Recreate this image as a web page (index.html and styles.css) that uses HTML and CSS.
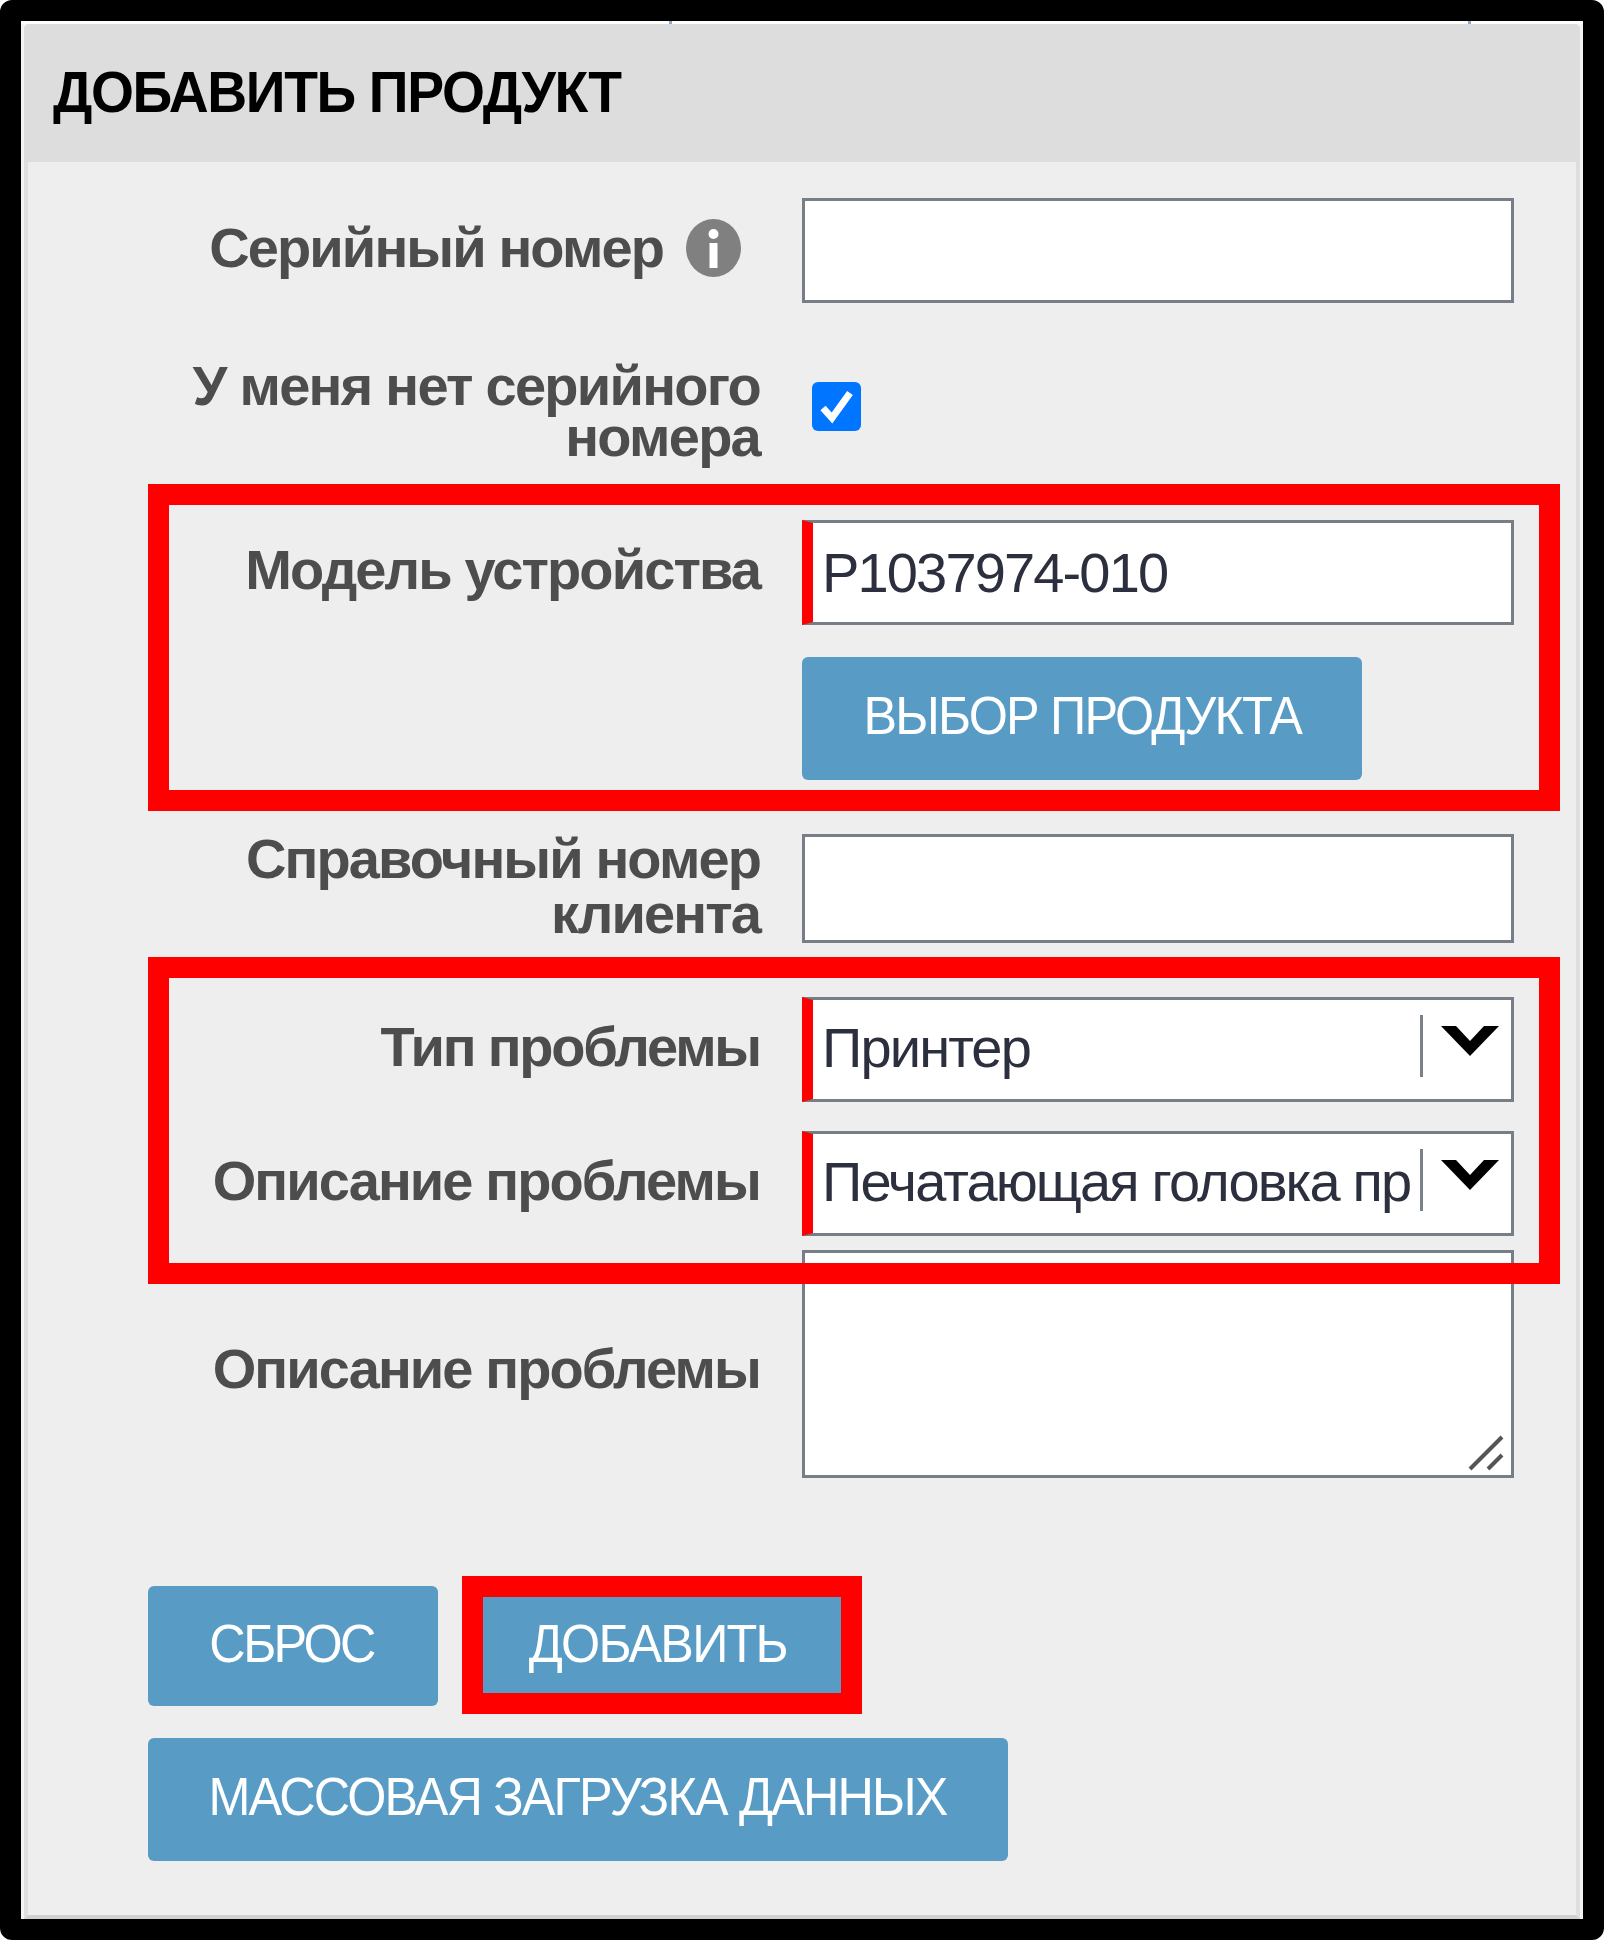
FILE: index.html
```html
<!DOCTYPE html>
<html lang="ru">
<head>
<meta charset="utf-8">
<title>Добавить продукт</title>
<link rel="stylesheet" href="styles.css">
</head>
<body>
<main class="frame">
  <section class="panel">
    <h1 class="panel-title"><span>ДОБАВИТЬ ПРОДУКТ</span></h1>
    <form class="panel-body">
      <div class="row row-serial">
        <div class="label"><span>Серийный номер</span>
          <svg class="info" viewBox="0 0 55 58"><ellipse cx="27.500" cy="29" rx="27.500" ry="29" fill="#808080"/><circle cx="27.500" cy="15" r="5" fill="#fff"/><path d="M23.500 24h8v25h-8z" fill="#fff"/></svg>
        </div>
        <div class="field"></div>
      </div>
      <div class="row row-check">
        <div class="label label-tight">У меня нет серийного<br>номера</div>
        <div class="checkbox"><svg viewBox="0 0 49 49"><path d="M11 26l9 10 18-25" fill="none" stroke="#fff" stroke-width="7"/></svg></div>
      </div>
      <div class="row row-model">
        <div class="label">Модель устройства</div>
        <div class="stack">
          <div class="field required">P1037974-010</div>
          <button type="button" class="btn btn-pick"><span>ВЫБОР ПРОДУКТА</span></button>
        </div>
      </div>
      <div class="row row-ref">
        <div class="label label-wide">Справочный номер<br>клиента</div>
        <div class="field field-ref"></div>
      </div>
      <div class="row row-type">
        <div class="label">Тип проблемы</div>
        <div class="field required select"><span>Принтер</span><i class="divider"></i><svg class="chevron" viewBox="0 0 58 30"><path d="M0 0h15l14 15L43 0h15L29 30z"/></svg></div>
      </div>
      <div class="row row-desc">
        <div class="label">Описание проблемы</div>
        <div class="field required select"><span>Печатающая головка пр</span><i class="divider"></i><svg class="chevron" viewBox="0 0 58 30"><path d="M0 0h15l14 15L43 0h15L29 30z"/></svg></div>
      </div>
      <div class="row row-text">
        <div class="label label-text">Описание проблемы</div>
        <div class="field field-text"><svg class="grip" viewBox="0 0 36 36"><path d="M2 34L34 2M20 34L34 20" fill="none" stroke="#555" stroke-width="4"/></svg></div>
      </div>
      <div class="actions">
        <button type="button" class="btn btn-reset"><span>СБРОС</span></button>
        <button type="button" class="btn btn-add"><span>ДОБАВИТЬ</span></button>
      </div>
      <button type="button" class="btn btn-bulk"><span>МАССОВАЯ ЗАГРУЗКА ДАННЫХ</span></button>
    </form>
  </section>
  <div class="highlight highlight-model"></div>
  <div class="highlight highlight-problem"></div>
  <div class="highlight highlight-add"></div>
</main>
</body>
</html>
```
FILE: styles.css
```css
* { box-sizing: border-box; }

body {
  margin: 0;
  background: #fff;
  font-family: "Liberation Sans", Arial, sans-serif;
}

.frame {
  position: relative;
  width: 1604px;
  height: 1940px;
  border: 21px solid #000;
  border-radius: 12px;
  background: #f4f4f4;
}

.panel {
  display: flex;
  flex-direction: column;
  height: 100%;
  padding: 3px 3px 0;
  background:
    linear-gradient(#8fa9c4, #8fa9c4) 648px 0 / 3px 3px no-repeat,
    linear-gradient(#8fa9c4, #8fa9c4) 1447px 0 / 3px 3px no-repeat,
    linear-gradient(#fff, #fff) 0 0 / 100% 3px no-repeat;
}

.panel-title {
  height: 138px;
  margin: 0;
  padding: 38px 0 0 29px;
  background: #ddd;
  border-radius: 5px 5px 0 0;
  color: #000;
  font-size: 57px;
  line-height: 60px;
  letter-spacing: -1.450px;
  white-space: nowrap;
}

.panel-title span {
  display: inline-block;
  transform: scaleX(0.97);
  transform-origin: left;
}

.panel-body {
  flex: 1;
  padding: 0 62px 0 120px;
  border: solid #dfdfdf;
  border-width: 0 4px;
  border-bottom: 4px solid #d0d0d0;
  background: #eee;
}

.row {
  display: grid;
  grid-template-columns: 613px 712px;
  column-gap: 41px;
  align-items: start;
}

.row-serial { margin-top: 36px; }
.row-check { margin-top: 56px; }
.row-model { margin-top: 59px; }
.row-ref { margin-top: 54px; }
.row-type { margin-top: 54px; }
.row-desc { margin-top: 29px; }
.row-text { margin-top: 14px; }

.label {
  padding: 22px 1px 0 0;
  color: #4d4d4d;
  font-size: 56px;
  font-weight: 700;
  line-height: 56px;
  letter-spacing: -1.900px;
  text-align: right;
  white-space: nowrap;
}

.row-serial .label {
  display: flex;
  justify-content: flex-end;
  gap: 23px;
  padding: 21px 20px 0 0;
}

.row-serial .label span { padding-top: 1px; }

.row-type .label { letter-spacing: -2.200px; }

.label-tight { padding-top: 1px; line-height: 51px; letter-spacing: -1.750px; }
.label-wide { margin-top: -2px; padding-top: 0; line-height: 54.500px; }
.label-text { padding-top: 91px; }

.row-check .label { height: 102px; }
.row-ref .label { height: 107px; }

.info { width: 55px; height: 58px; }

.field {
  height: 105px;
  border: 3px solid #787e88;
  background: #fff;
  color: #2b2f3e;
  font-size: 56px;
  line-height: 100px;
  letter-spacing: -1.850px;
  white-space: nowrap;
}

.field.required {
  padding-left: 9px;
  border-left: 11px solid #f00;
}

.field-ref { height: 109px; }

.field-text {
  display: flex;
  justify-content: flex-end;
  align-items: flex-end;
  height: 228px;
}

.grip { width: 36px; height: 36px; margin: 0 7px 4px 0; }

.select { display: flex; line-height: 95px; }
.select span { flex: 1; min-width: 0; }

.divider {
  flex: none;
  width: 3px;
  height: 62px;
  margin-top: 15px;
  background: #7b818b;
}

.chevron { flex: none; width: 58px; height: 30px; margin: 26px 12px 0 18px; }

.checkbox {
  width: 49px;
  height: 49px;
  margin: 23px 0 0 10px;
  border-radius: 6px;
  background: #0075ff;
}

.checkbox svg { display: block; }

.stack { display: flex; flex-direction: column; align-items: flex-start; gap: 32px; }
.stack .field { width: 100%; }

.btn {
  display: block;
  height: 123px;
  padding: 0 0 6px;
  border: 0;
  border-radius: 6px;
  background: #589cc6;
  color: #fff;
  font: 53px "Liberation Sans", Arial, sans-serif;
  letter-spacing: -1.900px;
  text-align: center;
  white-space: nowrap;
}

.btn span { display: inline-block; transform: scaleX(0.95); }

.btn-pick { width: 560px; }
.btn-reset { width: 290px; height: 120px; padding-right: 3px; letter-spacing: -2.700px; }
.btn-add { width: 388px; height: 120px; }
.btn-bulk { width: 860px; margin-top: 32px; }

.actions { display: flex; gap: 26px; margin-top: 108px; }

.highlight { position: absolute; border: 21px solid #f00; }
.highlight-model { left: 127px; top: 463px; width: 1412px; height: 327px; }
.highlight-problem { left: 127px; top: 936px; width: 1412px; height: 327px; }
.highlight-add { left: 441px; top: 1555px; width: 400px; height: 138px; }
```
